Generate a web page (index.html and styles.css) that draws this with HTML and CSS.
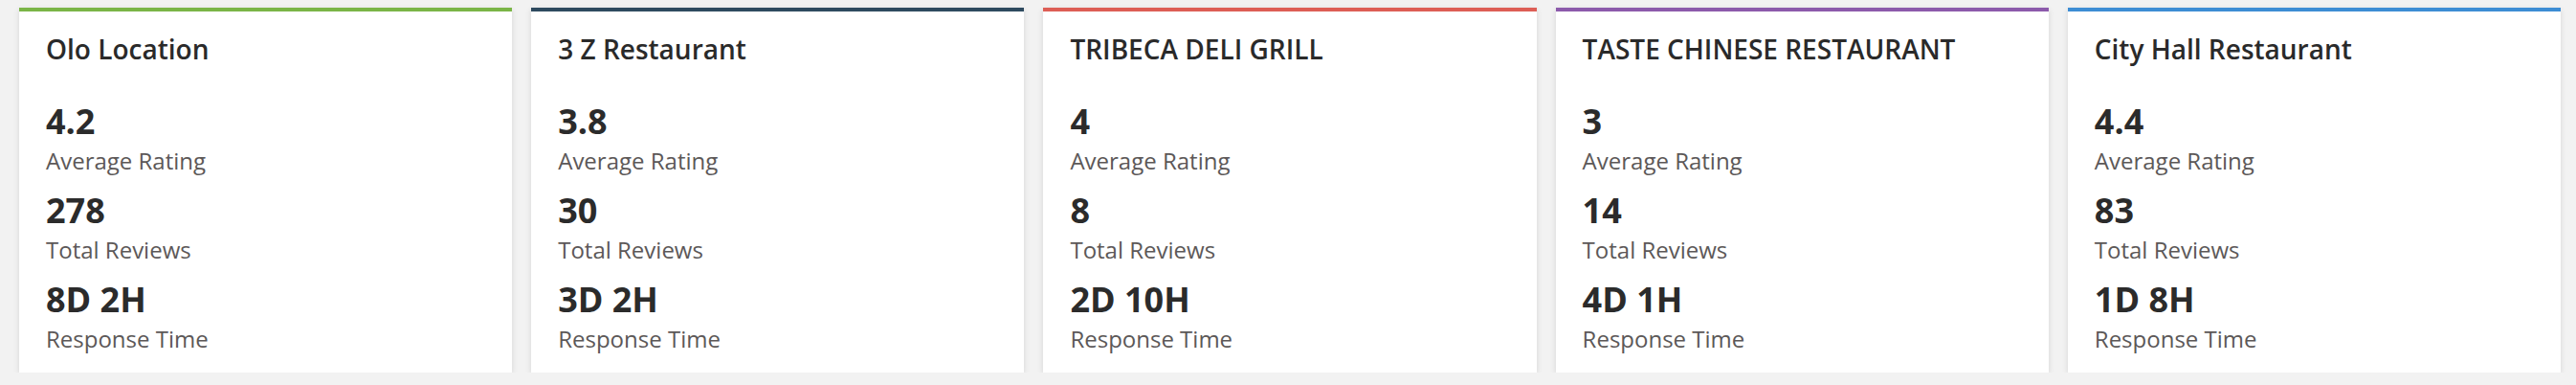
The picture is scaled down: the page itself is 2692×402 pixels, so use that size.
FILE: index.html
```html
<!DOCTYPE html>
<html lang="en">
<head>
  <meta charset="UTF-8" />
  <meta name="viewport" content="width=device-width, initial-scale=1.0"/>
  <title>Location Reviews</title>
  <link rel="stylesheet" href="styles.css">
</head>
<body>
  <div class="cards">
    <div class="card green">
      <h2 class="card-title">Olo Location</h2>
      <div class="stat">
        <div class="stat-value">4.2</div>
        <div class="stat-label">Average Rating</div>
      </div>
      <div class="stat">
        <div class="stat-value">278</div>
        <div class="stat-label">Total Reviews</div>
      </div>
      <div class="stat">
        <div class="stat-value">8D 2H</div>
        <div class="stat-label">Response Time</div>
      </div>
    </div>

    <div class="card navy">
      <h2 class="card-title">3 Z Restaurant</h2>
      <div class="stat">
        <div class="stat-value">3.8</div>
        <div class="stat-label">Average Rating</div>
      </div>
      <div class="stat">
        <div class="stat-value">30</div>
        <div class="stat-label">Total Reviews</div>
      </div>
      <div class="stat">
        <div class="stat-value">3D 2H</div>
        <div class="stat-label">Response Time</div>
      </div>
    </div>

    <div class="card red">
      <h2 class="card-title">TRIBECA DELI GRILL</h2>
      <div class="stat">
        <div class="stat-value">4</div>
        <div class="stat-label">Average Rating</div>
      </div>
      <div class="stat">
        <div class="stat-value">8</div>
        <div class="stat-label">Total Reviews</div>
      </div>
      <div class="stat">
        <div class="stat-value">2D 10H</div>
        <div class="stat-label">Response Time</div>
      </div>
    </div>

    <div class="card purple">
      <h2 class="card-title">TASTE CHINESE RESTAURANT</h2>
      <div class="stat">
        <div class="stat-value">3</div>
        <div class="stat-label">Average Rating</div>
      </div>
      <div class="stat">
        <div class="stat-value">14</div>
        <div class="stat-label">Total Reviews</div>
      </div>
      <div class="stat">
        <div class="stat-value">4D 1H</div>
        <div class="stat-label">Response Time</div>
      </div>
    </div>

    <div class="card blue">
      <h2 class="card-title">City Hall Restaurant</h2>
      <div class="stat">
        <div class="stat-value">4.4</div>
        <div class="stat-label">Average Rating</div>
      </div>
      <div class="stat">
        <div class="stat-value">83</div>
        <div class="stat-label">Total Reviews</div>
      </div>
      <div class="stat">
        <div class="stat-value">1D 8H</div>
        <div class="stat-label">Response Time</div>
      </div>
    </div>
  </div>
</body>
</html>
```

FILE: styles.css
```css
body {
  font-family: 'Open Sans', 'Noto Sans', sans-serif;
  background-color: #f2f2f2;
  margin: 0;
  padding: 8px 16px 0 20px;
}

.cards {
  display: flex;
  gap: 20px;
}

.card {
  flex: 1;
  background-color: white;
  border-top: 4px solid #ccc;
  box-shadow: 0 2px 6px rgba(0, 0, 0, 0.12);
  padding: 21px 28px 18px;
  height: 381px;
  box-sizing: border-box;
}

.green  { border-top-color: #7ab547; }
.navy   { border-top-color: #2e4a5f; }
.red    { border-top-color: #dd5e56; }
.purple { border-top-color: #8c5aab; }
.blue   { border-top-color: #3d8dd4; }

.card-title {
  margin: 0 0 36px;
  font-size: 28px;
  line-height: 37px;
  font-weight: 600;
  color: #2a2a2a;
}

.stat {
  margin-bottom: 12px;
}

.stat-value {
  font-size: 36px;
  line-height: 42px;
  font-weight: 700;
  color: #2b2b2b;
}

.stat-label {
  font-size: 24px;
  line-height: 39px;
  color: #5c5858;
}
```
